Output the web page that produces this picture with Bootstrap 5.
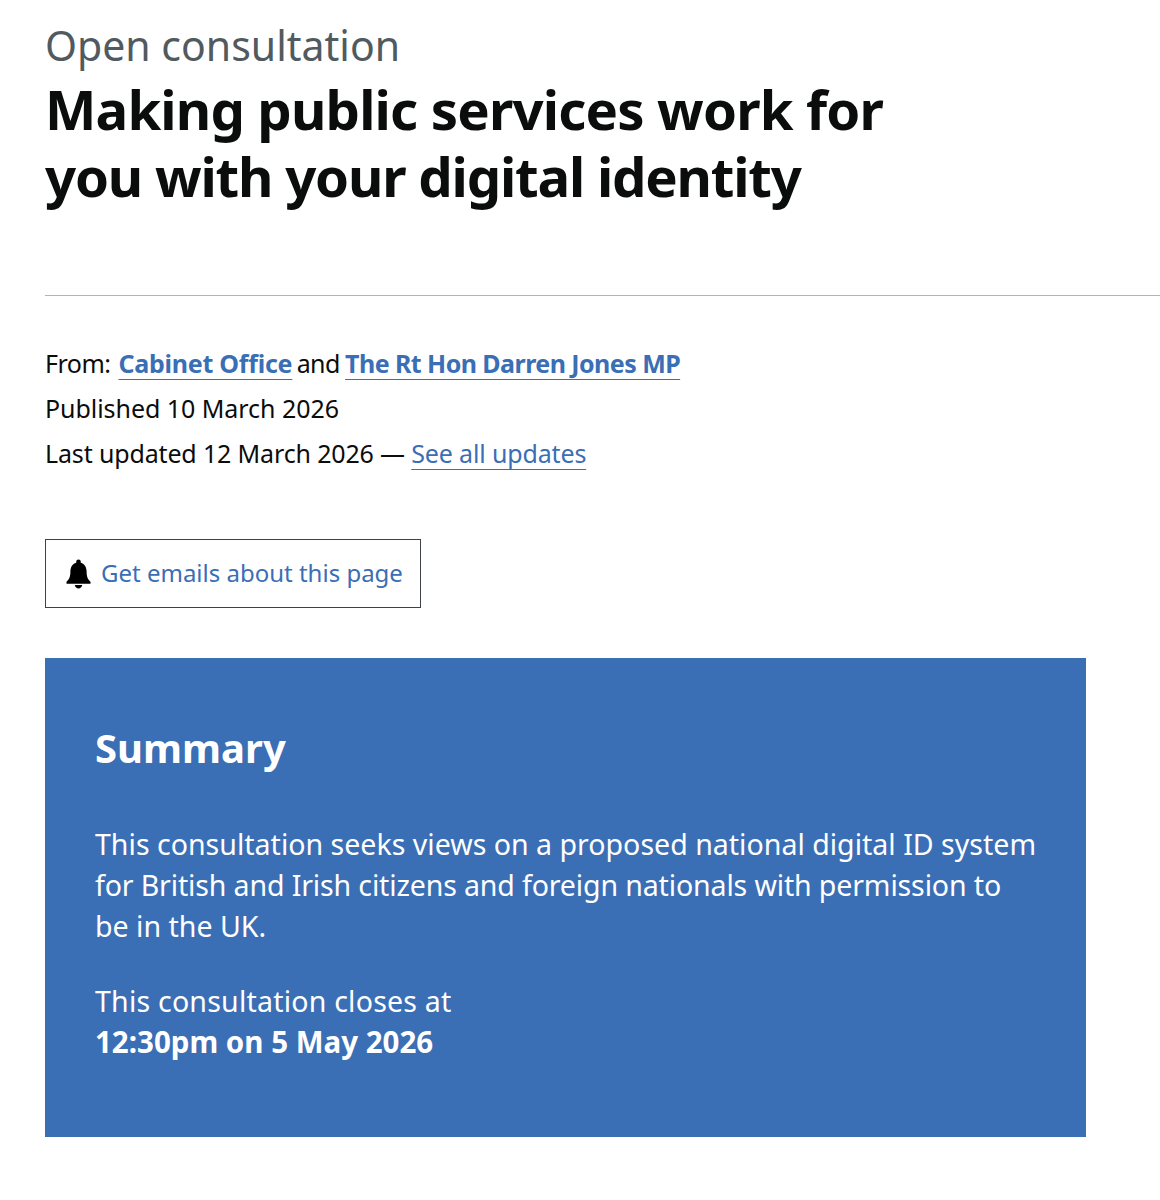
<!DOCTYPE html>
<html lang="en">
<head>
  <meta charset="UTF-8">
  <title>Open consultation</title>
  <link href="https://cdn.jsdelivr.net/npm/bootstrap@5.3.0/dist/css/bootstrap.min.css" rel="stylesheet">
  <style>
    body {
      font-family: "Noto Sans", "Liberation Sans", sans-serif;
      color: #0b0c0c;
      background: #fff;
    }
    .page-wrap { padding: 21px 0 0 45px; }
    .doc-type { font-size: 41px; line-height: 48px; color: #505a5f; }
    .doc-title { font-size: 54.5px; line-height: 67px; font-weight: 700; margin: 7px 0 0; }
    .title-first { letter-spacing: -0.83px; }
    .title-second { letter-spacing: -1.2px; }
    .doc-rule { border-top: 1px solid #b1b4b6; margin: 85px 0 0; opacity: 1; }
    .meta-block { margin-top: 45px; font-size: 25px; line-height: 45px; letter-spacing: -0.15px; }
    .meta-block a { color: #3a6eb5; text-underline-offset: 6px; text-decoration-thickness: 1px; }
    .meta-block .from-label { letter-spacing: -0.5px; margin-right: 8px; }
    .meta-block .org-short { letter-spacing: -0.25px; }
    .meta-block .org-long { letter-spacing: -0.55px; }
    .meta-block .joiner { letter-spacing: -0.6px; margin: 0 -1px 0 -2px; }
    .meta-block .pub-line { letter-spacing: -0.05px; }
    .email-box { width: 376px; height: 69px; margin-top: 63px; border: 1px solid #3d4346; border-radius: 0; color: #3a6eb5; font-size: 24px; padding: 0 0 0 20px; gap: 10px; }
    .email-box span { margin-bottom: 2px; }
    .summary-box { width: 1041px; height: 479px; margin-top: 50px; background: #3a6eb5; color: #fff; padding: 62px 41px 0 50px; }
    .summary-box h2 { font-size: 40px; line-height: 56px; font-weight: 700; margin: 0 0 47px; }
    .summary-box p { font-size: 28.55px; line-height: 41px; margin: 0 0 34px; }
    .summary-box .tight-line { letter-spacing: -0.15px; }
    .summary-box .closes-at { letter-spacing: 0.2px; }
    .summary-box strong { font-size: 29.5px; }
  </style>
</head>
<body>
  <div class="page-wrap">
    <div class="doc-type">Open consultation</div>
    <h1 class="doc-title"><span class="title-first">Making public services work for</span><br><span class="title-second">you with your digital identity</span></h1>
    <hr class="doc-rule">
    <div class="meta-block">
      <div><span class="from-label">From:</span><a href="#" class="fw-bold org-short">Cabinet Office</a> <span class="joiner">and</span> <a href="#" class="fw-bold org-long">The Rt Hon Darren Jones MP</a></div>
      <div class="pub-line">Published 10 March 2026</div>
      <div>Last updated 12 March 2026 — <a href="#">See all updates</a></div>
    </div>
    <a href="#" class="email-box d-flex align-items-center text-decoration-none">
      <svg width="25" height="30" viewBox="0 0 25 30"><path fill="#000" d="M12.500 0.500a2.300 2.300 0 0 1 2.300 2.300v0.900C18.800 4.800 20.600 8.500 20.600 12.500c0 5 1 7.800 3.900 10.300v2H0.500v-2c2.900-2.500 3.900-5.300 3.900-10.300 0-4 1.800-7.700 5.800-8.800v-0.900a2.300 2.300 0 0 1 2.300-2.300zM8.700 26h7.600c-0.500 2.200-2 3.400-3.800 3.400S9.200 28.200 8.700 26z"/></svg>
      <span>Get emails about this page</span>
    </a>
    <div class="summary-box">
      <h2>Summary</h2>
      <p>This consultation seeks views on a proposed national digital ID system <span class="tight-line">for British and Irish citizens and foreign nationals with permission to</span><br>be in the UK.</p>
      <p><span class="closes-at">This consultation closes at</span><br><strong>12:30pm on 5 May 2026</strong></p>
    </div>
  </div>
</body>
</html>
